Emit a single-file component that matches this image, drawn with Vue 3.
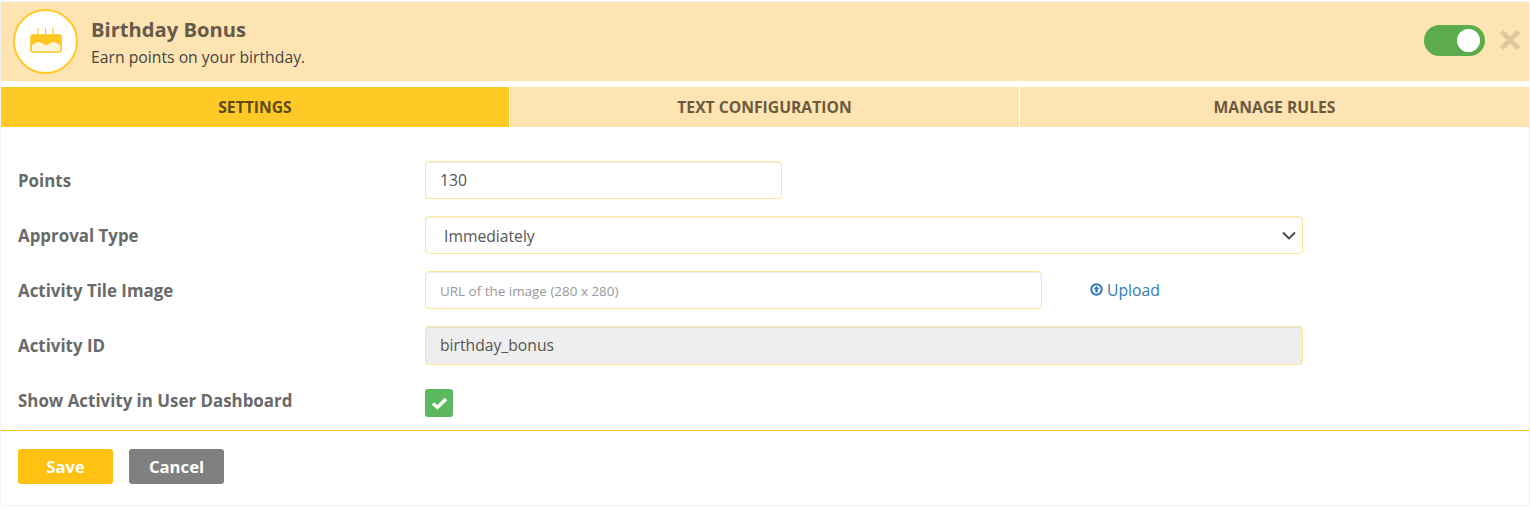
<script setup>
const tabs = [
  { label: 'SETTINGS', active: true },
  { label: 'TEXT CONFIGURATION', active: false },
  { label: 'MANAGE RULES', active: false }
]
</script>

<template>
  <div class="page">
    <div class="card">
      <header class="head">
        <div class="logo">
          <svg width="32" height="25" viewBox="0 0 32 25">
            <path d="M8 0v7M15.500 0v7M23 0v7" stroke="#ffc61f" stroke-width="1.200" fill="none" />
            <path d="M1 9a2 2 0 0 1 2-2h26a2 2 0 0 1 2 2v13a2 2 0 0 1-2 2H3a2 2 0 0 1-2-2z" fill="#fff4d8" stroke="#ffc61f" stroke-width="1.600" />
            <path d="M1 9a2 2 0 0 1 2-2h26a2 2 0 0 1 2 2v8c-3 0-4-3-7.500-3s-4 3-7.500 3-4-3-7.500-3S4 17 1 17z" fill="#ffc61f" />
          </svg>
        </div>
        <div class="head-text">
          <div class="title">Birthday Bonus</div>
          <div class="sub">Earn points on your birthday.</div>
        </div>
        <div class="head-actions">
          <div class="toggle"><span class="knob"></span></div>
          <svg class="close" width="22" height="22" viewBox="0 0 22 22">
            <path d="M2.500 2.500l17 17M19.500 2.500l-17 17" stroke="#e2c8a0" stroke-width="5" fill="none" />
          </svg>
        </div>
      </header>

      <nav class="tabs">
        <div v-for="t in tabs" :key="t.label" class="tab" :class="{ active: t.active }">{{ t.label }}</div>
      </nav>

      <form class="form" @submit.prevent>
        <div class="row">
          <label class="lbl">Points</label>
          <input class="ctl w-sm" value="130" />
        </div>
        <div class="row">
          <label class="lbl">Approval Type</label>
          <div class="ctl w-lg select">
            <span>Immediately</span>
            <svg width="14" height="9" viewBox="0 0 14 9"><path d="M1 1.500l6 6 6-6" stroke="#444" stroke-width="1.800" fill="none" /></svg>
          </div>
        </div>
        <div class="row">
          <label class="lbl">Activity Tile Image</label>
          <input class="ctl w-md ph" placeholder="URL of the image (280 x 280)" />
          <a class="upload">
            <svg width="13" height="13" viewBox="0 0 13 13">
              <circle cx="6.500" cy="6.500" r="5.200" fill="none" stroke="#337ab7" stroke-width="2" />
              <path d="M6.500 3l3 3.200H7.700v3.300H5.300V6.200H3.500z" fill="#337ab7" />
            </svg>
            Upload
          </a>
        </div>
        <div class="row">
          <label class="lbl">Activity ID</label>
          <input class="ctl w-lg disabled" value="birthday_bonus" disabled />
        </div>
        <div class="row check-row">
          <label class="lbl">Show Activity in User Dashboard</label>
          <span class="check">
            <svg width="17" height="13" viewBox="0 0 17 13"><path d="M2 6.500l4.500 4 8.500-8.500" stroke="#fff" stroke-width="3.400" fill="none" /></svg>
          </span>
        </div>
      </form>

      <footer class="foot">
        <button class="btn save" type="button">Save</button>
        <button class="btn cancel" type="button">Cancel</button>
      </footer>
    </div>
  </div>
</template>

<style>
html, body { margin: 0; background: #fff; }
</style>

<style scoped>
.page {
  padding-top: 1px;
  height: 507px;
  box-sizing: border-box;
  font-family: "Open Sans", sans-serif;
}
.card {
  box-sizing: border-box;
  width: 1530px;
  height: 505px;
  border: 1px solid #f2f2f2;
  border-radius: 3px;
  background: #fff;
}
.head {
  height: 79px;
  background: #ffe4b3;
  display: flex;
  align-items: center;
  padding: 0 8px 0 12px;
}
.logo {
  box-sizing: border-box;
  width: 65px;
  height: 65px;
  border-radius: 50%;
  border: 2px solid #ffc926;
  background: #fff;
  display: flex;
  align-items: center;
  justify-content: center;
  padding-bottom: 2px;
  margin-right: 1px;
}
.head-text { margin-left: 12px; }
.title {
  font-size: 20.150px;
  font-weight: 700;
  line-height: 24px;
  color: #665a4a;
  margin-top: 0;
}
.sub {
  font-size: 15.750px;
  line-height: 22px;
  margin-top: 5px;
  margin-bottom: -2px;
  color: #444;
}
.head-actions {
  margin-left: auto;
  display: flex;
  align-items: center;
  gap: 14px;
  margin-top: -3px;
}
.toggle {
  width: 61px;
  height: 31px;
  border-radius: 16px;
  background: #5cab4c;
  position: relative;
}
.knob {
  position: absolute;
  right: 5px;
  top: 4px;
  width: 23px;
  height: 23px;
  border-radius: 50%;
  background: #fff;
}
.tabs {
  margin-top: 6px;
  display: grid;
  grid-template-columns: 508px 510px 1fr;
  height: 40px;
}
.tab {
  background: #ffe4b3;
  color: #6b5a3e;
  font-size: 15.700px;
  font-weight: 700;
  display: flex;
  align-items: center;
  justify-content: center;
  border-left: 1px solid #fff;
  padding-bottom: 1px;
  box-sizing: border-box;
}
.tab:first-child { border-left: 0; }
.tab.active { background: #ffc926; color: #60491a; }
.form {
  padding: 34px 17px 0;
  height: 304px;
  box-sizing: border-box;
  border-bottom: 1px solid #ffc107;
}
.row {
  display: flex;
  align-items: center;
  height: 38px;
  margin-bottom: 17px;
}
.lbl {
  width: 407px;
  flex: none;
  font-size: 16.900px;
  font-weight: 700;
  color: #6a6a6a;
}
.ctl {
  box-sizing: border-box;
  height: 38px;
  border: 1px solid #ffe595;
  border-radius: 4px;
  background: #fff;
  padding: 0 14px;
  font: 15.700px "Open Sans", sans-serif;
  color: #555;
  outline: none;
  box-shadow: inset 0 1px 1px rgba(0, 0, 0, .075);
}
.ctl::placeholder { color: #999; opacity: 1; }
.ph { font-size: 13.450px; padding-top: 1px; }
.w-sm { width: 357px; }
.w-md { width: 617px; }
.w-lg { width: 878px; }
.select {
  display: flex;
  align-items: center;
  justify-content: space-between;
  padding: 1px 6px 0 18px;
}
.disabled { background: #eee; height: 39px; }
.upload {
  margin-left: 48px;
  color: #337ab7;
  font-size: 15.700px;
  display: flex;
  align-items: center;
  gap: 4px;
  margin-top: -1px;
}
.check-row { height: 28px; align-items: flex-start; padding-top: 8px; box-sizing: content-box; margin-top: 0; }
.check-row .lbl { margin-top: 0; }
.check {
  width: 28px;
  height: 28px;
  border-radius: 3px;
  background: #5cb85c;
  display: flex;
  align-items: center;
  justify-content: center;
}
.foot {
  display: flex;
  gap: 16px;
  padding: 18px 17px;
}
.btn {
  width: 95px;
  height: 35px;
  border: 0;
  border-radius: 3px;
  color: #fff;
  font: 700 16.700px "Open Sans", sans-serif;
}
.save { background: #ffc112; }
.cancel { background: #808080; }
</style>
